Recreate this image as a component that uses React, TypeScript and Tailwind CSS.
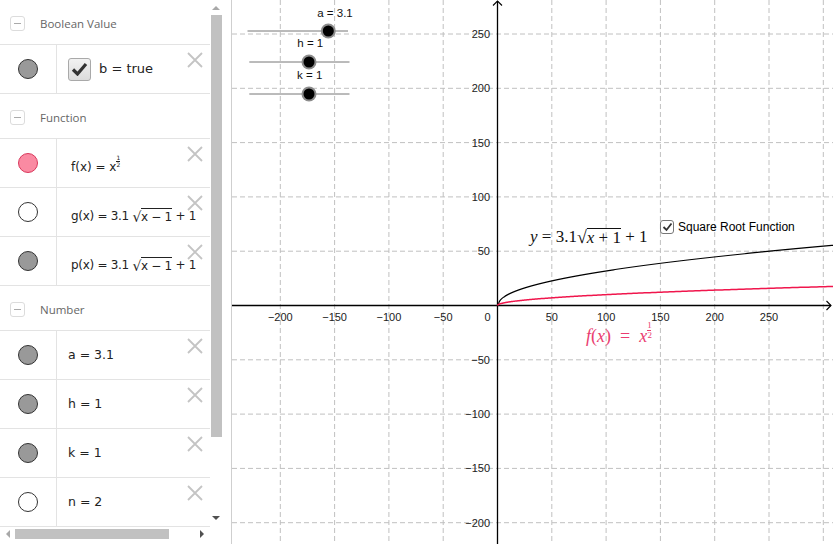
import React from 'react';

// Ventana de álgebra + vista gráfica (estilo GeoGebra)

const OX = 265.5;
const OY = 305.5;
const S = 54.3 / 50;

const xTicks = [-200, -150, -100, -50, 50, 100, 150, 200, 250, 300];
const yTicks = [-200, -150, -100, -50, 50, 100, 150, 200, 250];

const curve = (f: (x: number) => number, from: number) => {
  const pts: string[] = [];
  for (let i = 0; i <= 240; i++) {
    const x = from + Math.pow(i / 240, 2) * 320;
    pts.push(`${(OX + x * S).toFixed(2)},${(OY - f(x) * S).toFixed(2)}`);
  }
  return 'M' + pts.join(' L');
};

const MinusBox = () => (
  <div className="w-[15px] h-[15px] rounded-[3px] border border-[#dcdcdc] flex items-center justify-center">
    <div className="w-[7px] h-[1px] bg-[#aaa]" />
  </div>
);

const CloseX = () => (
  <svg className="absolute right-[7px] top-[7px]" width="16" height="16" viewBox="0 0 16 16">
    <path d="M1 1 L15 15 M15 1 L1 15" stroke="#c4c4c4" strokeWidth="1.8" />
  </svg>
);

const Header = ({ label }: { label: string }) => (
  <div className="h-[45px] border-b border-[#e3e3e3] flex items-center pl-[10px] pt-[3px] gap-[15px]">
    <MinusBox />
    <span className="font-['Open_Sans',sans-serif] text-[11.5px] text-[#666]">{label}</span>
  </div>
);

type Dot = 'gray' | 'white' | 'pink';

const Row = ({ dot, children, textLeft = 'pl-[11px] text-[12.5px]' }: { dot: Dot; children: React.ReactNode; textLeft?: string }) => {
  const dotCls =
    dot === 'gray'
      ? 'bg-[#999] border-[#333]'
      : dot === 'white'
      ? 'bg-white border-[#333]'
      : 'bg-[#fa8aa2] border-[#d9385c]';
  return (
    <div className="h-[49px] border-b border-[#e3e3e3] flex relative">
      <div className="w-[57px] border-r border-[#e3e3e3] flex items-center justify-center">
        <div className={`w-[20px] h-[20px] rounded-full border ${dotCls}`} />
      </div>
      <div className={`flex-1 flex items-center ${textLeft} font-['DejaVu_Sans',sans-serif] text-[#222] whitespace-nowrap`}>
        {children}
      </div>
      <CloseX />
    </div>
  );
};

const Sqrt = ({ children }: { children: React.ReactNode }) => (
  <span className="inline-flex items-end">
    <span className="text-[14px] leading-none">√</span>
    <span className="border-t border-[#222] leading-[14px] pt-[1px]">{children}</span>
  </span>
);

const Half = ({ size = 'text-[6px]' }: { size?: string }) => (
  <span className={`inline-flex flex-col items-center leading-none ${size} -translate-y-[6px]`}>
    <span>1</span>
    <span className="border-t border-current w-[4px] text-center">2</span>
  </span>
);

const Slider = ({ y, x1, x2, knob, label, lx, ly }: { y: number; x1: number; x2: number; knob: number; label: string; lx: number; ly: number }) => (
  <g>
    <text x={lx} y={ly} textAnchor="middle" fill="#111" fontSize="11.5">{label}</text>
    <line x1={x1} y1={y} x2={x2} y2={y} stroke="#777" strokeWidth="1" />
    <circle cx={knob} cy={y} r="7.5" fill="#8c8c8c" />
    <circle cx={knob} cy={y} r="5.5" fill="#000" />
  </g>
);

export default function App() {
  return (
    <div className="w-[833px] h-[544px] flex bg-white overflow-hidden">
      {/* Panel algebra */}
      <div className="w-[231px] h-full flex flex-col">
        <div className="flex h-[527px]">
          <div className="w-[210px] overflow-hidden">
            <Header label="Boolean Value" />
            <Row dot="gray">
              <div className="w-[23px] h-[23px] rounded-[3px] border border-[#a9a9a9] bg-gradient-to-b from-[#f2f2f2] to-[#dcdcdc] flex items-center justify-center mr-[8px]">
                <svg width="17" height="14" viewBox="0 0 17 14">
                  <path d="M2 7.5 L6.5 12 L15 2" fill="none" stroke="#333" strokeWidth="3.2" strokeLinejoin="miter" />
                </svg>
              </div>
              <span className="text-[13px]">b = true</span>
            </Row>
            <Header label="Function" />
            <Row dot="pink" textLeft="pl-[14px] pt-[8px] text-[12px]">
              <span>f(x) = x</span>
              <Half />
            </Row>
            <Row dot="white" textLeft="pl-[14px] pt-[8px] text-[12px] tracking-[-0.3px]">
              <span>g(x) = 3.1&nbsp;</span>
              <Sqrt>x − 1</Sqrt>
              <span>&nbsp;+ 1</span>
            </Row>
            <Row dot="gray" textLeft="pl-[14px] pt-[8px] text-[12px] tracking-[-0.3px]">
              <span>p(x) = 3.1&nbsp;</span>
              <Sqrt>x − 1</Sqrt>
              <span>&nbsp;+ 1</span>
            </Row>
            <Header label="Number" />
            <Row dot="gray">a = 3.1</Row>
            <Row dot="gray">h = 1</Row>
            <Row dot="gray">k = 1</Row>
            <Row dot="white">n = 2</Row>
          </div>
          {/* barra vertical */}
          <div className="w-[12px] h-full flex flex-col items-center">
            <div className="h-[15px] flex items-center justify-center">
              <div className="w-0 h-0 border-l-[4px] border-r-[4px] border-b-[4px] border-l-transparent border-r-transparent border-b-[#a8a8a8]" />
            </div>
            <div className="w-[11px] h-[422px] bg-[#c1c1c1]" />
            <div className="flex-1" />
            <div className="h-[18px] flex items-center justify-center">
              <div className="w-0 h-0 border-l-[4px] border-r-[4px] border-t-[4px] border-l-transparent border-r-transparent border-t-[#505050]" />
            </div>
          </div>
        </div>
        {/* barra horizontal */}
        <div className="w-[210px] h-[13px] flex items-center">
          <div className="w-[15px] flex items-center justify-center">
            <div className="w-0 h-0 border-t-[4px] border-b-[4px] border-r-[4px] border-t-transparent border-b-transparent border-r-[#a8a8a8]" />
          </div>
          <div className="w-[154px] h-[10px] bg-[#c1c1c1]" />
          <div className="flex-1 flex items-center justify-end pr-[6px]">
            <div className="w-0 h-0 border-t-[4px] border-b-[4px] border-l-[4px] border-t-transparent border-b-transparent border-l-[#505050]" />
          </div>
        </div>
      </div>

      {/* Vista gráfica */}
      <div className="flex-1 h-full border-l border-[#cfcfcf] relative overflow-hidden">
        <svg width="601" height="544" className="font-['Liberation_Sans',Arial,sans-serif] text-[11px] block">
          {xTicks.map((t) => (
            <line key={'vx' + t} x1={OX + t * S} y1={0} x2={OX + t * S} y2={544} stroke="#c0c0c0" strokeDasharray="5 3" />
          ))}
          {yTicks.map((t) => (
            <line key={'hy' + t} x1={0} y1={OY - t * S} x2={601} y2={OY - t * S} stroke="#c0c0c0" strokeDasharray="5 3" />
          ))}
          {/* ejes */}
          <line x1={0} y1={OY} x2={599} y2={OY} stroke="#000" strokeWidth="1.3" />
          <path d={`M594.5 ${OY - 4.5} L599 ${OY} L594.5 ${OY + 4.5}`} fill="none" stroke="#000" strokeWidth="1.1" />
          <line x1={OX} y1={1} x2={OX} y2={544} stroke="#000" strokeWidth="1.3" />
          <path d={`M${OX - 4.5} 5.5 L${OX} 1 L${OX + 4.5} 5.5`} fill="none" stroke="#000" strokeWidth="1.1" />
          {xTicks.filter((t) => t !== 300).map((t) => (
            <text key={'lx' + t} x={OX + t * S} y={OY + 15} textAnchor="middle" fill="#222">
              {t < 0 ? '−' + Math.abs(t) : t}
            </text>
          ))}
          <text x={OX - 10} y={OY + 15} textAnchor="middle" fill="#222">0</text>
          {yTicks.map((t) => (
            <text key={'ly' + t} x={OX - 7.5} y={OY - t * S + 4} textAnchor="end" fill="#222">
              {t < 0 ? '−' + Math.abs(t) : t}
            </text>
          ))}
          {/* curvas */}
          <path d={curve((x) => 3.1 * Math.sqrt(Math.max(x - 1, 0)) + 1, 1)} fill="none" stroke="#000" strokeWidth="1.2" />
          <path d={curve((x) => Math.sqrt(x), 0)} fill="none" stroke="#f0164c" strokeWidth="1.5" />
          {/* deslizadores */}
          <Slider y={31} x1={15.5} x2={116} knob={96.3} label="a = 3.1" lx={103} ly={16.5} />
          <Slider y={62} x1={17.3} x2={117.5} knob={77} label="h = 1" lx={78.3} ly={46.5} />
          <Slider y={94} x1={17.3} x2={117.5} knob={77} label="k = 1" lx={77.7} ly={79} />
        </svg>

        {/* casilla */}
        <div className="absolute left-[428px] top-[218px] flex items-center gap-[4px]">
          <div className="w-[14px] h-[14px] rounded-[3px] border-[1.5px] border-[#777] bg-white flex items-center justify-center">
            <svg width="11" height="10" viewBox="0 0 11 10">
              <path d="M1.5 5 L4.5 8 L9.5 1.5" fill="none" stroke="#333" strokeWidth="1.8" />
            </svg>
          </div>
          <span className="font-['Liberation_Sans',Arial,sans-serif] text-[12px] text-black">Square Root Function</span>
        </div>

        {/* etiqueta y = ... */}
        <div className="absolute left-[298px] top-[227px] font-['Liberation_Serif','DejaVu_Serif',serif] text-[17px] text-[#111] whitespace-nowrap flex items-end leading-[20px]">
          <i>y</i>
          <span>&nbsp;=&nbsp;3.1</span>
          <span className="text-[18px] leading-[20px]">√</span>
          <span className="border-t border-[#111] leading-[18px]"><i>x</i> + 1</span>
          <span>&nbsp;+ 1</span>
        </div>

        {/* etiqueta f(x) */}
        <div className="absolute left-[354px] top-[326px] font-['Liberation_Serif','DejaVu_Serif',serif] text-[18px] text-[#ea3d70] whitespace-nowrap flex items-end leading-[20px]">
          <i>f</i>
          <span>(</span>
          <i>x</i>
          <span>)&nbsp;&nbsp;=&nbsp;&nbsp;</span>
          <i>x</i>
          <Half size="text-[9px]" />
        </div>
      </div>
    </div>
  );
}
